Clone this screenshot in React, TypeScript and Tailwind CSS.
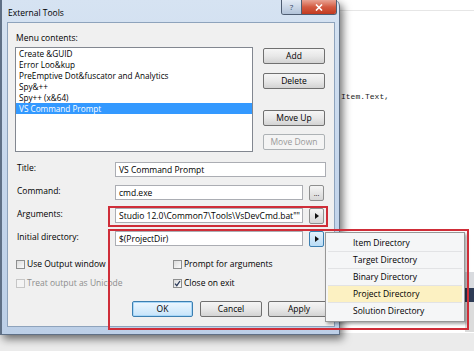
import React from "react";

const FONT = '"Open Sans", "Noto Sans", sans-serif';

function Button({
  label,
  className = "",
  disabled = false,
  primary = false,
}: {
  label: string;
  className?: string;
  disabled?: boolean;
  primary?: boolean;
}) {
  const base =
    "h-[16px] flex items-center justify-center rounded-[2px] border text-[8.5px] leading-none shrink-0";
  const look = disabled
    ? "border-[#adb2b5] bg-[#f4f4f4] text-[#9a9a9a]"
    : primary
    ? "border-[#3c7fb1] bg-linear-to-b from-[#eef7fe] to-[#c6e4fa] text-black shadow-[inset_0_0_0_1px_#a9d7f8]"
    : "border-[#707070] bg-linear-to-b from-[#f5f5f5] via-[#e8e8e8] to-[#d3d3d3] text-black";
  return <div className={`${base} ${look} ${className}`}>{label}</div>;
}

function Arrow() {
  return (
    <svg width="4" height="6" viewBox="0 0 4 6">
      <path d="M0 0 L4 3 L0 6 Z" fill="#111" />
    </svg>
  );
}

function SmallBtn({
  children,
  hover = false,
}: {
  children: React.ReactNode;
  hover?: boolean;
}) {
  const look = hover
    ? "border-[#3c7fb1] bg-linear-to-b from-[#e4f2fc] to-[#b9dcf6]"
    : "border-[#8e8f8f] bg-linear-to-b from-[#f5f5f5] to-[#d6d6d6]";
  return (
    <div
      className={`ml-[6px] w-[15px] h-[16px] shrink-0 rounded-[2px] border flex items-center justify-center text-[7px] leading-none ${look}`}
    >
      {children}
    </div>
  );
}

function TextBox({ text, width }: { text: string; width: string }) {
  return (
    <div
      className={`${width} h-[15px] shrink-0 border border-[#abadb3] bg-white pl-[3px] text-[8.5px] leading-[13px] whitespace-nowrap overflow-hidden`}
    >
      {text}
    </div>
  );
}

function Row({ label, children }: { label: string; children: React.ReactNode }) {
  return (
    <div className="flex h-[15px] items-start">
      <div className="w-[100px] shrink-0 pl-[2px] leading-[12px]">{label}</div>
      {children}
    </div>
  );
}

function Check({
  label,
  checked = false,
  disabled = false,
}: {
  label: string;
  checked?: boolean;
  disabled?: boolean;
}) {
  return (
    <div className="flex items-center h-[13px]">
      <div
        className={`ml-[1px] w-[9px] h-[9px] border flex items-center justify-center ${
          disabled
            ? "border-[#c6c6c6] bg-[#f4f4f4]"
            : "border-[#8e8f8f] bg-linear-to-br from-[#dcdcdc] to-[#fbfbfb]"
        }`}
      >
        {checked && (
          <svg width="7" height="7" viewBox="0 0 7 7">
            <path d="M1 3.6 L2.8 5.6 L6 1" stroke="#2a3a5a" strokeWidth="1.3" fill="none" />
          </svg>
        )}
      </div>
      <span className={`ml-[2px] leading-none ${disabled ? "text-[#8d8d8d]" : ""}`}>{label}</span>
    </div>
  );
}

export default function App() {
  const items = [
    "Create &GUID",
    "Error Loo&kup",
    "PreEmptive Dot&fuscator and Analytics",
    "Spy&++",
    "Spy++ (x&64)",
    "VS Command Prompt",
  ];
  const menu = [
    "Item Directory",
    "Target Directory",
    "Binary Directory",
    "Project Directory",
    "Solution Directory",
  ];
  return (
    <div
      className="relative w-[474px] h-[351px] overflow-hidden bg-white text-black text-[8.5px]"
      style={{ fontFamily: FONT }}
    >
      {/* background editor */}
      <div className="absolute left-[340px] right-0 top-[10px] h-px bg-[#e6e6e6]" />
      <div
        className="absolute left-[341px] top-[92px] text-[8px] leading-[10px] text-[#222]"
        style={{ fontFamily: '"Liberation Mono", monospace' }}
      >
        Item.Text,
      </div>
      <div className="absolute left-[465px] right-0 top-[272px] h-[16px] bg-[#d9dbdf]" />
      <div className="absolute left-[465px] right-0 top-[288px] h-[14px] bg-[#2e3b55]" />
      <div className="absolute left-[465px] right-0 top-[302px] h-[30px] bg-[#dcdcdc]" />
      <div className="absolute left-0 right-0 top-[333px] bottom-0 bg-[#ebebeb]" />

      {/* dialog window */}
      <div className="absolute left-0 top-0 w-[340px] h-[335px] flex flex-col border-l-[2px] border-r border-b border-[#5f7086] rounded-tr-[6px] bg-linear-to-b from-[#d6e3f2] via-[#c6d7ec] to-[#bccfe7] shadow-[3px_4px_8px_rgba(0,0,0,0.55)]">
        {/* title bar */}
        <div className="h-[22px] flex items-start shrink-0">
          <div className="pl-[6px] pt-[7px] leading-[11px] text-[8.5px]">External Tools</div>
          <div className="ml-auto mr-[2px] flex rounded-b-[3px] overflow-hidden border border-t-0 border-[#4e5d72]">
            <div className="w-[20px] h-[14px] bg-linear-to-b from-[#e3ebf5] to-[#b2c3d9] flex items-center justify-center text-[8px] leading-none text-[#314561] border-r border-[#4e5d72]">
              ?
            </div>
            <div className="w-[34px] h-[14px] bg-linear-to-b from-[#e8a394] via-[#d35a41] to-[#c2391f] flex items-center justify-center">
              <svg width="8" height="7" viewBox="0 0 8 7">
                <path d="M1 0.5 L7 6.5 M7 0.5 L1 6.5" stroke="#fff" strokeWidth="1.6" />
              </svg>
            </div>
          </div>
        </div>

        {/* client area */}
        <div className="flex-1 ml-[5px] mr-[4px] mb-[7px] border border-[#8ea3bc] bg-[#f0f0f0] pl-[7px] pt-[9px] flex flex-col">
          <div className="flex">
            <div className="flex flex-col w-[238px] shrink-0">
              <div className="h-[11px] leading-[11px] pl-px">Menu contents:</div>
              <div className="mt-[4px] h-[105px] border border-[#828790] bg-white">
                {items.map((it, i) => (
                  <div
                    key={it}
                    className={`h-[11px] leading-[11px] pl-[3px] text-[8.2px] whitespace-nowrap ${
                      i === items.length - 1 ? "bg-[#3399ff] text-white" : ""
                    }`}
                  >
                    {it}
                  </div>
                ))}
              </div>
            </div>
            <div className="ml-[10px] w-[62px] flex flex-col pt-[16px]">
              <Button label="Add" />
              <Button label="Delete" className="mt-[9px]" />
              <Button label="Move Up" className="mt-[21px]" />
              <Button label="Move Down" className="mt-[8px]" disabled />
            </div>
          </div>

          <div className="mt-[10px] flex flex-col gap-[8px]">
            <Row label="Title:">
              <TextBox text="VS Command Prompt" width="w-[211px]" />
            </Row>
            <Row label="Command:">
              <TextBox text="cmd.exe" width="w-[188px]" />
              <SmallBtn>...</SmallBtn>
            </Row>
            <Row label="Arguments:">
              <TextBox text={'Studio 12.0\\Common7\\Tools\\VsDevCmd.bat""'} width="w-[188px]" />
              <SmallBtn>
                <Arrow />
              </SmallBtn>
            </Row>
            <Row label="Initial directory:">
              <TextBox text="$(ProjectDir)" width="w-[188px]" />
              <SmallBtn hover>
                <Arrow />
              </SmallBtn>
            </Row>
          </div>

          <div className="mt-[12px] grid grid-cols-[157px_1fr] gap-y-[6px]">
            <Check label="Use Output window" />
            <Check label="Prompt for arguments" />
            <Check label="Treat output as Unicode" disabled />
            <Check label="Close on exit" checked />
          </div>

          <div className="mt-[11px] flex pl-[117px]">
            <Button label="OK" primary className="w-[61px]" />
            <Button label="Cancel" className="ml-[7px] w-[62px]" />
            <Button label="Apply" className="ml-[6px] w-[62px]" />
          </div>
        </div>
      </div>

      {/* popup menu */}
      <div className="absolute left-[325px] top-[232px] w-[140px] h-[90px] border border-[#979797] bg-[#f5f6f7] shadow-[2px_2px_3px_rgba(0,0,0,0.35)] pt-[2px] px-[2px]">
        {menu.map((m, i) => (
          <div
            key={m}
            className={`h-[17px] flex items-center pl-[25px] text-[8.5px] leading-none ${
              i < menu.length - 1 ? "border-b border-[#e2e3e5]" : ""
            } ${i === 3 ? "bg-[#fcf1c2]" : ""}`}
          >
            {m}
          </div>
        ))}
      </div>

      {/* red annotation boxes */}
      <div className="absolute left-[108px] top-[206px] w-[220px] h-[21px] border-[2px] border-[#cf2d38]" />
      <div className="absolute left-[108px] top-[229px] w-[361px] h-[101px] border-[2px] border-[#cf2d38]" />
    </div>
  );
}
